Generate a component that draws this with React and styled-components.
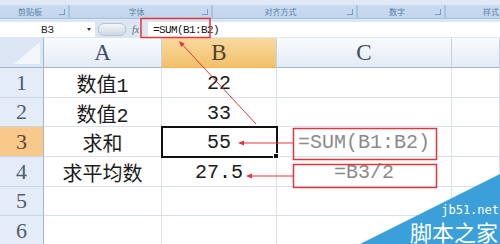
import React from "react";
import styled, { createGlobalStyle, css } from "styled-components";

const Global = createGlobalStyle`
  html, body { margin: 0; padding: 0; overflow: hidden; background: #fff; }
  body { width: 500px; height: 244px; position: relative; }
`;

const Page = styled.div`
  position: relative;
  width: 500px;
  height: 244px;
  overflow: hidden;
  background: #dbe6f3;
  font-family: "Liberation Serif", "Noto Sans CJK SC", serif;
`;

const Ribbon = styled.div`
  display: flex;
  flex-direction: column;
  height: 19px;
  background: #dfe9f5;
  border-bottom: 1px solid #a9c0dc;
  box-sizing: border-box;
`;

const RibbonTop = styled.div`
  height: 5px;
  display: flex;
`;

const RibbonLabels = styled.div`
  flex: 1;
  display: flex;
  background: linear-gradient(#cadcf1, #c0d4ec);
`;

const Group = styled.div`
  position: relative;
  width: ${(p) => p.w}px;
  flex: none;
  display: flex;
  align-items: center;
  justify-content: center;
  font-family: "Noto Sans CJK SC", sans-serif;
  font-size: 8px;
  color: #5f7fa8;
  border-right: 2px solid #aac2df;
  box-sizing: border-box;
  padding-right: 8px;
`;

const Launcher = styled.span`
  position: absolute;
  right: 3px;
  top: 4px;
  width: 5px;
  height: 5px;
  border: 1px solid #7f9dc2;
  border-top: none;
  border-left: none;
`;

const FormulaRow = styled.div`
  display: flex;
  align-items: center;
  height: 15px;
  margin-top: 3px;
`;

const NameBox = styled.div`
  width: 95px;
  height: 15px;
  background: #fff;
  display: flex;
  align-items: center;
  justify-content: center;
  position: relative;
  font-family: "Liberation Mono", monospace;
  font-size: 11px;
  color: #222;
  box-sizing: border-box;
`;

const Caret = styled.span`
  position: absolute;
  right: 4px;
  top: 6px;
  border-left: 2.5px solid transparent;
  border-right: 2.5px solid transparent;
  border-top: 3px solid #333;
`;

const Handle = styled.div`
  width: 26px;
  height: 11px;
  margin-left: 3px;
  border-radius: 6px;
  background: linear-gradient(#f3f6fa, #cfd8e4);
  border: 1px solid #b3c2d4;
`;

const Fx = styled.div`
  width: 16px;
  margin-left: 6px;
  font-style: italic;
  font-size: 10px;
  color: #667;
`;

const FormulaInput = styled.div`
  flex: 1;
  height: 15px;
  background: #fff;
  display: flex;
  align-items: center;
  padding-left: 5px;
  font-family: "Liberation Mono", monospace;
  font-size: 11px;
  letter-spacing: -0.6px;
  color: #111;
`;

const Sheet = styled.div`
  margin-top: 1px;
  display: grid;
  grid-template-columns: 44px 118px 115px 175px 1fr;
  grid-template-rows: 30px 30px 29px 30px 30px 29px 30px;
  background: #fff;
`;

const Corner = styled.div`
  background: #dce6f4;
  border-right: 1px solid #9eb6ce;
  border-bottom: 1px solid #9eb6ce;
  position: relative;
  &::after {
    content: "";
    position: absolute;
    right: 3px;
    bottom: 3px;
    border-left: 26px solid transparent;
    border-bottom: 22px solid #f3f6fb;
  }
`;

const ColHead = styled.div`
  display: flex;
  align-items: center;
  justify-content: center;
  font-size: 23px;
  color: #3f4e62;
  border-right: 1px solid #c5d2e2;
  border-bottom: 1px solid #9eb6ce;
  background: linear-gradient(#f9fbfd, #e4ebf5);
  ${(p) =>
    p.active &&
    css`
      background: linear-gradient(#f9d99f, #f1c06a);
      color: #4b4230;
      border-bottom-color: #f1b456;
    `}
`;

const RowHead = styled.div`
  display: flex;
  align-items: center;
  justify-content: center;
  font-size: 22px;
  color: #4f5d70;
  background: #e4ecf7;
  border-right: 1px solid #9eb6ce;
  border-bottom: 1px solid #c9d5e4;
  ${(p) =>
    p.active &&
    css`
      background: #f8c98a;
      color: #5a4a30;
    `}
`;

const Cell = styled.div`
  display: flex;
  align-items: center;
  justify-content: center;
  padding-top: 2px;
  box-sizing: border-box;
  font-family: "Liberation Mono", "Noto Sans CJK SC", monospace;
  font-size: 20px;
  color: ${(p) => (p.muted ? "#8a8a8a" : "#1b1b1b")};
  border-right: 1px solid #dae0ea;
  border-bottom: 1px solid #dae0ea;
  white-space: nowrap;
  position: relative;
  ${(p) =>
    p.selected &&
    css`
      outline: 2px solid #111;
      outline-offset: -1px;
      z-index: 1;
      &::after {
        content: "";
        position: absolute;
        right: -3px;
        bottom: -3px;
        width: 4px;
        height: 4px;
        background: #111;
        border: 1px solid #fff;
      }
    `}
`;

const Overlay = styled.svg`
  position: absolute;
  left: 0;
  top: 0;
  z-index: 5;
  pointer-events: none;
`;

const Watermark = styled.div`
  position: absolute;
  right: 0;
  bottom: 0;
  width: 140px;
  height: 70px;
  z-index: 6;
  display: flex;
  flex-direction: column;
  align-items: flex-end;
  justify-content: flex-end;
  gap: 1px;
  color: #fff;
  background: linear-gradient(to bottom right, transparent 49.5%, #3ba0da 50.5%);
`;

const WmSite = styled.span`
  font-family: "DejaVu Sans Mono", monospace;
  font-size: 12px;
  line-height: 13px;
  margin-right: 1px;
`;

const WmName = styled.span`
  font-family: "Noto Sans CJK SC", sans-serif;
  font-size: 22px;
  line-height: 26px;
  margin-right: 2px;
`;

const groups = [
  { label: "剪贴板", w: 70 },
  { label: "字体", w: 143 },
  { label: "对齐方式", w: 145 },
  { label: "数字", w: 88 },
  { label: "样式", w: 100 },
];

const rows = [
  ["数值1", "22", ""],
  ["数值2", "33", ""],
  ["求和", "55", "=SUM(B1:B2)"],
  ["求平均数", "27.5", "=B3/2"],
  ["", "", ""],
  ["", "", ""],
];

function Arrow({ x1, y1, x2, y2 }) {
  const a = Math.atan2(y2 - y1, x2 - x1);
  const l = 6;
  const w = 2.5;
  const bx = x2 - l * Math.cos(a);
  const by = y2 - l * Math.sin(a);
  const px = -Math.sin(a) * w;
  const py = Math.cos(a) * w;
  return (
    <g>
      <line x1={x1} y1={y1} x2={bx} y2={by} stroke="#e5343c" strokeWidth="1" />
      <polygon points={`${x2},${y2} ${bx + px},${by + py} ${bx - px},${by - py}`} fill="#e5343c" />
    </g>
  );
}

export default function App() {
  return (
    <Page>
      <Global />
      <Ribbon>
        <RibbonTop />
        <RibbonLabels>
          {groups.map((g) => (
            <Group key={g.label} w={g.w}>
              {g.label}
              <Launcher />
            </Group>
          ))}
        </RibbonLabels>
      </Ribbon>
      <FormulaRow>
        <NameBox>
          B3
          <Caret />
        </NameBox>
        <Handle />
        <Fx>fx</Fx>
        <FormulaInput>=SUM(B1:B2)</FormulaInput>
      </FormulaRow>
      <Sheet>
        <Corner />
        <ColHead>A</ColHead>
        <ColHead active>B</ColHead>
        <ColHead>C</ColHead>
        <ColHead />
        {rows.map((r, i) => (
          <React.Fragment key={i}>
            <RowHead active={i === 2}>{i + 1}</RowHead>
            <Cell>{r[0]}</Cell>
            <Cell selected={i === 2}>{r[1]}</Cell>
            <Cell muted>{r[2]}</Cell>
            <Cell />
          </React.Fragment>
        ))}
      </Sheet>
      <Overlay width="500" height="244">
        <rect x="141" y="18.5" width="69" height="19" fill="none" stroke="#e5343c" strokeWidth="1.5" />
        <rect x="293.5" y="128.5" width="143" height="31" fill="none" stroke="#e5343c" strokeWidth="1.5" />
        <rect x="293.5" y="164.5" width="143" height="23" fill="none" stroke="#e5343c" strokeWidth="1.5" />
        <Arrow x1={293} y1={143} x2={238} y2={143} />
        <Arrow x1={293} y1={176} x2={246} y2={176} />
        <Arrow x1={256} y1={124} x2={179} y2={41} />
      </Overlay>
      <Watermark>
        <WmSite>jb51.net</WmSite>
        <WmName>脚本之家</WmName>
      </Watermark>
    </Page>
  );
}
